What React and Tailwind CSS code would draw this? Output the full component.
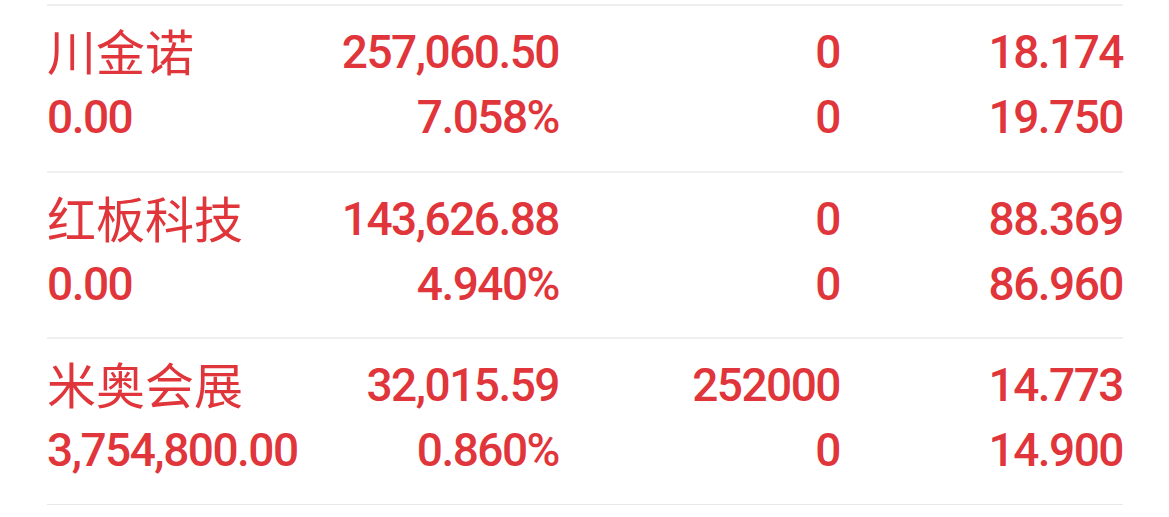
const rows = [
  { name: '川金诺', amount: '0.00', value: '257,060.50', ratio: '7.058%', qty: '0', qty2: '0', price: '18.174', price2: '19.750' },
  { name: '红板科技', amount: '0.00', value: '143,626.88', ratio: '4.940%', qty: '0', qty2: '0', price: '88.369', price2: '86.960' },
  { name: '米奥会展', amount: '3,754,800.00', value: '32,015.59', ratio: '0.860%', qty: '252000', qty2: '0', price: '14.773', price2: '14.900' },
]

function HoldingRow({ row }) {
  const num = 'text-[46px] font-medium tracking-[-1.5px] text-right'
  return (
    <div className="h-[166.5px] border-t-2 border-[#efefef] pt-[14px]">
      <div className="grid grid-cols-[250px_262px_281px_1fr] leading-[65px] text-[#e0353a]">
        <span className="text-[49px] relative top-[2px]">{row.name}</span>
        <span className={num}>{row.value}</span>
        <span className={num}>{row.qty}</span>
        <span className={num}>{row.price}</span>

        <span className="text-[46px] font-medium tracking-[-1.5px]">{row.amount}</span>
        <span className={num}>{row.ratio}</span>
        <span className={num}>{row.qty2}</span>
        <span className={num}>{row.price2}</span>
      </div>
    </div>
  )
}

export default function App() {
  return (
    <div
      className="w-[1169px] h-[517px] bg-white overflow-hidden pt-[4px] pl-[47px]"
      style={{ fontFamily: "Roboto, 'Noto Sans CJK SC', sans-serif" }}
    >
      <div className="w-[1076px] border-b border-[#e8e8e8]">
        {rows.map((row) => (
          <HoldingRow key={row.name} row={row} />
        ))}
      </div>
    </div>
  )
}
